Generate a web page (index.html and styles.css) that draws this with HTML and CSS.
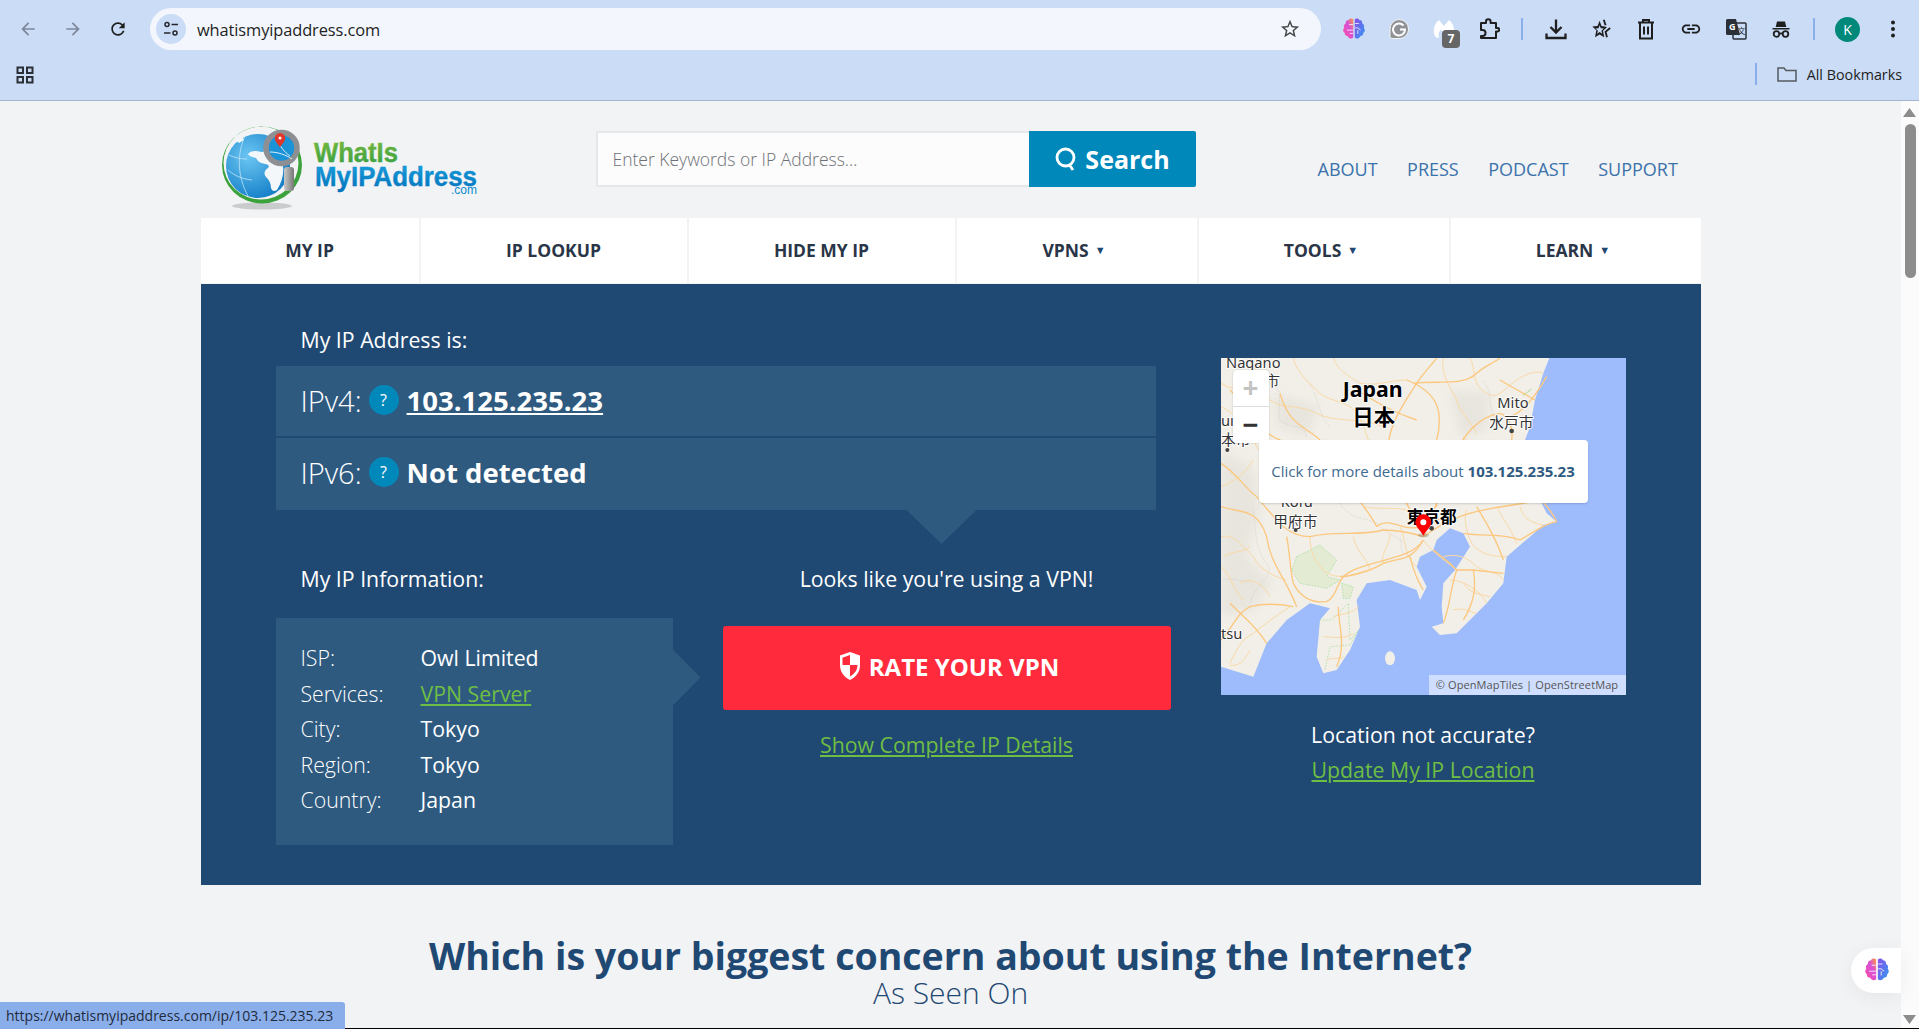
FILE: index.html
```html
<!DOCTYPE html>
<html lang="en">
<head>
    <meta charset="UTF-8">
    <meta name="viewport" content="width=device-width, initial-scale=1.0">
    <title>What Is My IP Address</title>
    <link rel="stylesheet" href="styles.css">
</head>
<body>
    <svg class="sprites" width="0" height="0">
        <defs>
            <linearGradient id="brainLeft" x1="0" y1="1" x2="1" y2="0">
                <stop offset="0" stop-color="#ff4fa0"/>
                <stop offset="0.6" stop-color="#d64fd8"/>
                <stop offset="1" stop-color="#ff9b3d"/>
            </linearGradient>
            <linearGradient id="brainRight" x1="0" y1="0" x2="1" y2="1">
                <stop offset="0" stop-color="#8a4fe8"/>
                <stop offset="1" stop-color="#2f9bf5"/>
            </linearGradient>
            <symbol id="brain" viewBox="2 2 20 20">
                <path fill="url(#brainLeft)" d="M11.300 3.200C10 1.900 7.700 2.200 7 3.900 5.300 3.900 4.200 5.300 4.500 7 2.900 7.700 2.300 9.600 3.100 11 1.700 12.300 1.900 14.600 3.500 15.500 3.400 17.300 4.700 18.600 6.400 18.500 6.900 20.500 9.700 21.300 11.300 19.800Z"/>
                <path fill="url(#brainRight)" d="M12.700 3.200C14 1.900 16.300 2.200 17 3.900 18.700 3.900 19.800 5.300 19.500 7 21.100 7.700 21.700 9.600 20.900 11 22.300 12.300 22.100 14.600 20.500 15.500 20.600 17.300 19.300 18.600 17.600 18.500 17.100 20.500 14.300 21.300 12.700 19.800Z"/>
                <path fill="none" stroke="#fff" stroke-width="0.700" d="M11 8H7.500M11 13H5.500M8 16h3M13 7h3.500M13 11h2.500l2.500 2M15.500 16.500V13"/>
            </symbol>
        </defs>
    </svg>

    <!-- browser bar -->
    <header class="chrome">
        <div class="toolbar">
            <span class="tb-btn"><svg class="ic-20" viewBox="0 0 24 24"><path fill="#7d8798" d="M20 11H7.830l5.590-5.590L12 4l-8 8 8 8 1.410-1.410L7.830 13H20v-2z"/></svg></span>
            <span class="tb-btn"><svg class="ic-20" viewBox="0 0 24 24"><path fill="#7d8798" d="M12 4l-1.410 1.410L16.170 11H4v2h12.170l-5.580 5.590L12 20l8-8z"/></svg></span>
            <span class="tb-btn"><svg class="ic-20" viewBox="0 0 24 24"><path fill="#1f1f1f" d="M17.650 6.350C16.200 4.900 14.210 4 12 4c-4.420 0-7.990 3.580-7.990 8s3.570 8 7.990 8c3.730 0 6.840-2.550 7.730-6h-2.080c-.82 2.330-3.040 4-5.650 4-3.310 0-6-2.690-6-6s2.690-6 6-6c1.660 0 3.140.69 4.220 1.780L13 11h7V4l-2.350 2.350z"/></svg></span>
            <div class="omnibox">
                <span class="tune">
                    <svg class="ic-18" viewBox="0 0 18 18" fill="none" stroke="#26282c" stroke-width="1.500"><circle cx="5" cy="4.500" r="2"/><path d="M9.500 4.500H16M2 13h6.500"/><circle cx="13" cy="13" r="2"/></svg>
                </span>
                <span class="url">whatismyipaddress.com</span>
                <svg class="ic-22" viewBox="0 0 24 24"><path fill="#444746" d="M22 9.240l-7.190-.62L12 2 9.190 8.630 2 9.240l5.460 4.730L5.820 21 12 17.270 18.180 21l-1.630-7.030L22 9.240zM12 15.400l-3.760 2.270 1-4.280-3.320-2.880 4.380-.38L12 6.100l1.710 4.040 4.380.38-3.320 2.880 1 4.280L12 15.400z"/></svg>
            </div>
            <span class="tb-btn"><svg class="ic-22"><use href="#brain"/></svg></span>
            <span class="tb-btn">
                <svg class="ic-22" viewBox="0 0 22 22"><path fill="#8f9296" stroke="#f4f4f4" d="M11 1.500a9.500 9.500 0 0 1 9.500 9.500c0 5.200-4.200 9.500-9.500 9.500H4a2 2 0 0 1-2-2V11A9.500 9.500 0 0 1 11 1.500z"/><path fill="none" stroke="#fff" stroke-width="2" d="M15.500 7.500A6 6 0 1 0 17 11.500h-5"/></svg>
            </span>
            <span class="tb-btn">
                <svg class="ic-22" viewBox="0 0 22 22"><path fill="#fff" d="M1 16C0 9 3 4 6 2l5 6 5-6c3 2 6 7 5 14-1 3-3 4-5 4 1-4 0-7-2-8l-3 3-3-3c-2 1-3 4-2 8-2 0-4-1-5-4z"/></svg>
                <span class="badge">7</span>
            </span>
            <span class="tb-btn"><svg class="ic-22" viewBox="0 0 22 22" fill="none" stroke="#1f1f1f" stroke-width="2" stroke-linejoin="round"><path d="M3 5h5V3.500a2.300 2.300 0 0 1 4.600 0V5H18v5h1.500a1.700 1.700 0 0 1 0 3.400H18V20H3v-2h1.500a2.500 2.500 0 0 0 0-6H3z"/></svg></span>
            <span class="tb-sep"></span>
            <span class="tb-btn"><svg class="ic-22" viewBox="0 0 22 22" fill="none" stroke="#1f1f1f" stroke-width="2.300"><path d="M11 1.500V14M5.500 9l5.500 5.500L16.500 9M1.500 15.500V20h19v-4.500"/></svg></span>
            <span class="tb-btn"><svg class="ic-22" viewBox="0 0 24 24"><path fill="#1f1f1f" d="M14 9.240l-3.500-.4L8.500 3 6.200 8.630 0.500 9.240l4.400 4.200L3.500 21l5-3 5 3-1.300-7.030 4.300-4zM8.500 15.400l-2.700 1.700.8-3.300-2.500-2.300 3.300-.3L8.500 8l1.200 3.200 3.300.3-2.500 2.300.8 3.300z" transform="translate(2 0)"/><path fill="none" stroke="#1f1f1f" stroke-width="2" d="M15 2l2 6M22 11l-5 4 1.500 6"/></svg></span>
            <span class="tb-btn"><svg class="ic-22" viewBox="0 0 22 22" fill="none" stroke="#1f1f1f" stroke-width="2"><path d="M3 4.500h16M8 4V2h6v2M5 5v15.500h12V5M9 8.500v8M13 8.500v8"/></svg></span>
            <span class="tb-btn"><svg class="ic-22" viewBox="0 0 24 24"><path fill="#1f1f1f" d="M3.900 12c0-1.710 1.390-3.100 3.100-3.100h4V7H7c-2.760 0-5 2.240-5 5s2.240 5 5 5h4v-1.900H7c-1.710 0-3.100-1.390-3.100-3.100zM8 13h8v-2H8v2zm9-6h-4v1.900h4c1.710 0 3.100 1.390 3.100 3.100s-1.390 3.100-3.100 3.100h-4V17h4c2.760 0 5-2.240 5-5s-2.240-5-5-5z"/></svg></span>
            <span class="tb-btn">
                <svg class="ic-24" viewBox="0 0 24 24"><rect x="9" y="6" width="13" height="16" rx="1" fill="#cadcf6" stroke="#2b2f36" stroke-width="1.500"/><path d="M2 3.500A1.500 1.500 0 0 1 3.500 2H12l4 16H3.500A1.500 1.500 0 0 1 2 16.500z" fill="#2b2f36"/><text class="tr-g" x="5" y="13">G</text><text class="tr-zh" x="13.500" y="16.500">文</text></svg>
            </span>
            <span class="tb-btn"><svg class="ic-22" viewBox="0 0 22 22"><path fill="#1f1f1f" d="M7 3.500h8l1.300 5.500H5.700zM2.500 10h17v1.600h-17z"/><g fill="none" stroke="#1f1f1f" stroke-width="1.800"><circle cx="6.500" cy="16" r="2.800"/><circle cx="15.500" cy="16" r="2.800"/><path d="M9.300 15.500h3.400"/></g></svg></span>
            <span class="tb-sep"></span>
            <span class="tb-btn"><span class="avatar">K</span></span>
            <span class="tb-btn"><svg class="ic-20" viewBox="0 0 20 20" fill="#1f1f1f"><circle cx="10" cy="3.500" r="2"/><circle cx="10" cy="10" r="2"/><circle cx="10" cy="16.500" r="2"/></svg></span>
        </div>
        <div class="bookmarks">
            <svg class="ic-18 apps" viewBox="0 0 18 18" fill="none" stroke="#2b2f36" stroke-width="2"><rect x="1.500" y="1.500" width="5.500" height="5.500"/><rect x="11" y="1.500" width="5.500" height="5.500"/><rect x="1.500" y="11" width="5.500" height="5.500"/><rect x="11" y="11" width="5.500" height="5.500"/></svg>
            <span class="tb-sep"></span>
            <svg class="ic-22 folder" viewBox="0 0 22 22" fill="none" stroke="#565a60" stroke-width="1.500"><path d="M2 5h6l2 2.500h10V18H2z"/></svg>
            <span class="all-bookmarks">All Bookmarks</span>
        </div>
    </header>

    <div class="viewport">
        <main class="page">
            <div class="site-header">
                <a class="logo" href="#">
                    <svg width="275" height="92" viewBox="215 120 275 92">
                        <defs>
                            <radialGradient id="sphere" cx="0.35" cy="0.35" r="0.8">
                                <stop offset="0" stop-color="#6cc6f2"/>
                                <stop offset="1" stop-color="#0875c2"/>
                            </radialGradient>
                            <linearGradient id="handle" x1="0" y1="0" x2="1" y2="0">
                                <stop offset="0" stop-color="#c8c8c8"/>
                                <stop offset="1" stop-color="#777"/>
                            </linearGradient>
                            <linearGradient id="greenText" x1="0" y1="0" x2="0" y2="1">
                                <stop offset="0" stop-color="#7cba3d"/>
                                <stop offset="1" stop-color="#2f9e44"/>
                            </linearGradient>
                            <linearGradient id="blueText" x1="0" y1="0" x2="0" y2="1">
                                <stop offset="0" stop-color="#1aa0dc"/>
                                <stop offset="1" stop-color="#0072bc"/>
                            </linearGradient>
                        </defs>
                        <ellipse cx="262" cy="206" rx="30" ry="3.500" fill="#c9cbcd"/>
                        <path fill="#3ca23c" fill-rule="evenodd" d="M222 165a40 38.500 0 1 0 80 0 40 38.500 0 1 0-80 0zM223.500 163a37.500 36.500 0 1 1 75 0 37.500 36.500 0 1 1-75 0z"/>
                        <circle cx="258" cy="166" r="32" fill="url(#sphere)"/>
                        <path fill="#f4f7fa" d="M248 154c4-4 9-3 13-2 5 0 8-2 12 0 6 3 9 8 10 14 1 8-1 16-6 24-3 2-5 1-6-2 0-5-2-8-5-11-3-4-1-7 2-9 2-2 0-4-3-4-4-1-7-2-9-6-3-1-6-1-8-4zM236 140l6-3 2 3-5 3z"/>
                        <path fill="none" stroke="#bfe3f7" stroke-width="0.800" d="M228 170c8 7 16 9 24 10M245 136c-8 18-8 40 3 60M229 155c6 3 12 4 18 4"/>
                        <circle cx="281.500" cy="148" r="15.500" fill="#1c93d6" stroke="#8d8f92" stroke-width="5.500"/>
                        <path fill="none" stroke="#d8eefa" stroke-width="1" d="M270 152c8 0 16 3 22 7M276 138c4 8 8 14 14 18"/>
                        <path fill="#e1372b" d="M280 133a5.200 5.200 0 0 1 5.200 5.200c0 3.200-3.500 6-5.200 9-1.700-3-5.200-5.800-5.200-9A5.200 5.200 0 0 1 280 133z"/>
                        <circle cx="280" cy="138" r="1.500" fill="#fff"/>
                        <rect x="284" y="167" width="10" height="24" rx="3" fill="url(#handle)"/>
                        <text class="logo-what" x="314" y="162" textLength="84" lengthAdjust="spacingAndGlyphs" fill="url(#greenText)" stroke="url(#greenText)">WhatIs</text>
                        <text class="logo-my" x="315" y="186" textLength="162" lengthAdjust="spacingAndGlyphs" fill="url(#blueText)" stroke="url(#blueText)">MyIPAddress</text>
                        <text class="logo-com" x="451" y="194" textLength="26" lengthAdjust="spacingAndGlyphs">.com</text>
                    </svg>
                </a>
                <form class="search">
                    <input class="search-input" type="text" placeholder="Enter Keywords or IP Address...">
                    <button class="search-btn" type="button">
                        <svg class="ic-24" viewBox="0 0 24 24" fill="none" stroke="#fff" stroke-width="2.800"><circle cx="11.500" cy="10.500" r="8.500"/><path d="M15.500 18l3.500 5"/></svg>
                        Search
                    </button>
                </form>
                <nav class="top-links">
                    <a href="#">ABOUT</a>
                    <a href="#">PRESS</a>
                    <a href="#">PODCAST</a>
                    <a href="#">SUPPORT</a>
                </nav>
            </div>

            <nav class="main-nav">
                <a href="#">MY IP</a>
                <a href="#">IP LOOKUP</a>
                <a href="#">HIDE MY IP</a>
                <a href="#">VPNS<i class="caret">▼</i></a>
                <a href="#">TOOLS<i class="caret">▼</i></a>
                <a href="#">LEARN<i class="caret">▼</i></a>
            </nav>

            <section class="panel">
                <div class="panel-main">
                    <h2 class="panel-title">My IP Address is:</h2>
                    <div class="ip-box">
                        <div class="ip-row">
                            <span class="ip-label">IPv4:</span>
                            <span class="help">?</span>
                            <a class="ip-value" href="#">103.125.235.23</a>
                        </div>
                        <div class="ip-row ip-row-last">
                            <span class="ip-label">IPv6:</span>
                            <span class="help">?</span>
                            <span class="ip-value">Not detected</span>
                        </div>
                    </div>

                    <div class="info-grid">
                        <div class="info-col">
                            <h3 class="panel-title">My IP Information:</h3>
                            <dl class="info-box">
                                <dt>ISP:</dt><dd>Owl Limited</dd>
                                <dt>Services:</dt><dd><a href="#">VPN Server</a></dd>
                                <dt>City:</dt><dd>Tokyo</dd>
                                <dt>Region:</dt><dd>Tokyo</dd>
                                <dt>Country:</dt><dd>Japan</dd>
                            </dl>
                        </div>
                        <div class="vpn-col">
                            <p class="panel-title">Looks like you're using a VPN!</p>
                            <a class="rate-btn" href="#">
                                <svg width="22" height="28" viewBox="0 0 22 28"><path fill="#fff" d="M11 0l10 3.500V13c0 7-4 12-10 15C5 25 1 20 1 13V3.500z"/><path fill="#ff2a3c" d="M11 3L3.500 5.700V13H11zM11 13v11.500c4.500-2.500 7.500-6.500 7.500-11.500z"/></svg>
                                RATE YOUR VPN
                            </a>
                            <a class="green-link details-link" href="#">Show Complete IP Details</a>
                        </div>
                    </div>
                </div>

                <div class="panel-side">
                    <div class="map">
                        <svg class="map-svg" width="405" height="337" viewBox="33 24 1215 1011">
                            <defs>
                                <filter id="soft"><feGaussianBlur stdDeviation="14"/></filter>
                            </defs>
                            <rect x="33" y="24" width="1215" height="1011" fill="#9ebcfc"/>
                            <path fill="#f1efe8" d="M33 24H1018L1000 70 975 150 960 230 945 270 975 340 985 440 1010 490 1040 515 1000 525 960 560 890 620 880 700 830 760 800 790 740 850 690 855 665 830 700 820 695 770 700 700 735 660 780 590 760 550 720 535 680 570 670 600 630 620 620 650 650 710 630 750 620 720 540 690 470 700 440 750 450 830 420 900 380 960 340 970 320 920 330 810 360 775 300 760 230 810 170 880 130 980 33 950Z"/>
                            <ellipse cx="540" cy="925" rx="15" ry="21" fill="#f1efe8"/>
                            <g filter="url(#soft)" fill="#e2dfd7" opacity="0.600">
                                <path d="M33 300L130 350 150 480 110 620 190 700 130 780 33 800Z"/>
                                <path d="M190 130L330 170 290 260 200 230Z"/>
                                <path d="M720 120L840 130 830 240 750 260Z"/>
                            </g>
                            <g fill="#e3ebd3" stroke="#9adb94" stroke-width="2" stroke-dasharray="5 4">
                                <path d="M260 620L330 585 380 630 350 680 390 690 350 715 270 700 245 660Z"/>
                                <path d="M395 700L430 710 420 745 400 745Z"/>
                                <path fill="none" d="M330 810H365L415 760 420 870 445 840 420 885 360 890 345 960"/>
                            </g>
                            <path d="M940 135l25-18" stroke="#a6dc93" stroke-width="5" stroke-dasharray="3 3" fill="none"/>
                            <g fill="none" stroke="#c9c6bf" stroke-width="2" stroke-dasharray="3 4">
                                <path d="M200 110c20 40 0 70 10 100 40 30 70 10 80 50M290 90c40 50 30 100 70 140M820 90c30 40 10 80 40 120M390 460c30 50 70 40 110 60 40 40 70 40 90 70M130 480c10 60 0 110 40 160 30 40-30 50-50 120M570 560c10 30-10 40 30 60M40 690c30-10 60 10 80 0"/>
                            </g>
                            <g fill="none" stroke="#fbd9a6" stroke-width="3">
                                <path d="M33 100C80 130 130 110 180 150 220 180 260 160 320 190 380 220 440 200 520 230"/>
                                <path d="M250 24C260 70 300 100 330 130 370 160 410 150 440 190 470 230 470 280 500 320"/>
                                <path d="M370 24C380 60 420 80 450 100 500 110 540 90 590 90"/>
                                <path d="M700 24C690 70 720 110 740 150 750 190 780 210 800 250"/>
                                <path d="M780 24C800 60 780 100 830 130 860 150 880 120 920 90 950 70 980 60 1000 70"/>
                                <path d="M900 270C890 320 930 340 975 340"/>
                                <path d="M560 300C620 290 680 320 730 320"/>
                                <path d="M33 170C70 190 110 220 130 270 150 320 190 340 240 360"/>
                                <path d="M130 330C100 380 60 400 33 410"/>
                                <path d="M240 360C300 390 360 370 400 380"/>
                                <path d="M33 560C70 550 100 590 130 620 150 660 190 680 230 690"/>
                                <path d="M33 650C60 670 70 720 100 750"/>
                                <path d="M60 940C80 900 90 870 130 850 180 810 210 790 240 770"/>
                                <path d="M430 560C440 610 470 620 480 660"/>
                                <path d="M300 560C300 600 310 630 340 660 370 690 420 680 470 660"/>
                                <path d="M540 550C540 590 510 610 520 640"/>
                                <path d="M570 530C590 570 580 620 620 650"/>
                                <path d="M640 570C660 600 690 620 740 660"/>
                                <path d="M770 480C760 510 770 540 780 570 800 610 840 620 890 620"/>
                                <path d="M860 470C880 510 900 530 920 580"/>
                                <path d="M930 470C940 510 970 520 1000 525"/>
                                <path d="M720 690C760 690 810 720 830 760"/>
                                <path d="M730 780C760 770 790 790 800 790"/>
                                <path d="M370 800C400 790 430 790 445 770"/>
                                <path d="M340 860C370 860 400 870 430 850"/>
                                <path d="M350 930C370 920 390 930 400 920"/>
                                <path d="M120 24C130 60 160 80 190 110M440 300C480 270 510 300 540 330M760 260C790 300 830 310 870 300M820 330C860 370 900 360 960 400"/>
                                <path d="M40 620C70 600 100 610 120 590M90 700C120 680 160 700 180 740M460 470C510 480 550 470 590 480M120 900C100 940 80 950 60 945"/>
                                <path d="M700 620C740 610 770 620 800 650 830 670 860 660 880 690M760 700C780 730 800 730 840 740"/>
                            </g>
                            <g fill="none" stroke="#fcc77e" stroke-width="4">
                                <path d="M33 340C80 370 110 420 140 440 200 510 230 560 300 560 380 540 450 560 520 540 570 540 610 550 640 560"/>
                                <path d="M640 560C680 470 700 400 730 320 760 260 800 200 870 190 900 200 910 240 905 270"/>
                                <path d="M640 550C600 470 560 430 540 330 520 260 560 190 620 100 640 70 660 50 680 24"/>
                                <path d="M640 560C760 470 850 480 990 450 1020 470 1030 500 1040 515"/>
                                <path d="M730 320C800 330 880 270 930 280"/>
                                <path d="M500 530C470 470 430 440 400 380 380 320 340 270 290 240 260 220 230 200 210 130"/>
                                <path d="M610 100C680 90 760 110 800 70 820 50 850 40 870 24"/>
                                <path d="M590 90C690 130 700 190 680 270 660 340 680 400 680 470"/>
                                <path d="M60 120C110 170 150 250 210 270 250 290 300 260 380 300"/>
                                <path d="M33 470C90 490 140 470 170 560 180 640 230 690 260 770"/>
                                <path d="M230 560C240 610 240 660 250 700 270 740 300 760 350 755 380 740 380 700 400 680 430 650 500 640 560 620 590 610 620 600 640 570"/>
                                <path d="M385 770C385 830 410 880 380 950"/>
                                <path d="M640 570C600 640 570 620 520 640 470 670 410 680 390 680"/>
                                <path d="M670 600L720 640 740 660 790 660 880 670"/>
                                <path d="M740 660C720 720 720 770 700 820M790 660C800 720 790 760 760 810"/>
                                <path d="M760 550C820 560 880 550 930 570 980 540 1010 520 1040 515"/>
                                <path d="M800 470C830 520 860 570 880 630"/>
                                <path d="M600 620C610 660 620 690 640 720"/>
                                <path d="M33 870C70 830 80 790 120 770 160 760 200 760 250 770M60 760C100 800 140 830 170 880"/>
                                <path d="M1010 80C970 150 930 190 900 200M870 90C920 120 960 140 975 150M440 120C520 170 560 190 620 210"/>
                                <path d="M700 500C650 530 620 540 580 530 550 520 520 510 500 530"/>
                            </g>
                            <text class="map-label" x="48" y="55">Nagano</text>
                            <text class="map-label" x="165" y="108">市</text>
                            <text class="map-label map-bold map-big" x="398" y="142">Japan</text>
                            <text class="map-label map-bold map-big map-cjk" x="427" y="225">日本</text>
                            <text class="map-label" x="862" y="175">Mito</text>
                            <text class="map-label map-cjk" x="838" y="235">水戸市</text>
                            <circle cx="905" cy="243" r="7" fill="#444"/>
                            <text class="map-label" x="33" y="228">uı</text>
                            <text class="map-label map-cjk" x="33" y="285">本市</text>
                            <circle cx="52" cy="300" r="6" fill="#444"/>
                            <text class="map-label" x="212" y="470">Kofu</text>
                            <text class="map-label map-cjk" x="190" y="530">甲府市</text>
                            <circle cx="257" cy="540" r="6" fill="#444"/>
                            <text class="map-label map-bold map-cjk map-city" x="590" y="518">東京都</text>
                            <circle cx="665" cy="535" r="7" fill="#444"/>
                            <text class="map-label" x="33" y="868">tsu</text>
                            <ellipse cx="640" cy="556" rx="16" ry="6" fill="#000" opacity="0.180"/>
                            <path fill="#f00" d="M640 493a24 24 0 0 1 24 24c0 14-16 24-24 40-8-16-24-26-24-40a24 24 0 0 1 24-24z"/>
                            <circle cx="640" cy="517" r="9" fill="#fff"/>
                        </svg>
                        <div class="zoom-ctl">
                            <span class="zoom-in">+</span>
                            <span class="zoom-out">−</span>
                        </div>
                        <div class="map-popup">Click for more details about <b>103.125.235.23</b></div>
                        <div class="map-attrib">© OpenMapTiles | OpenStreetMap</div>
                    </div>
                    <p class="panel-title side-note">Location not accurate?</p>
                    <a class="green-link" href="#">Update My IP Location</a>
                </div>
            </section>

            <h2 class="concern">Which is your biggest concern about using the Internet?</h2>
            <h3 class="seen-on">As Seen On</h3>
        </main>

        <div class="scrollbar">
            <i class="arrow-up"></i>
            <i class="thumb"></i>
            <i class="arrow-down"></i>
        </div>

        <div class="status-bubble">https://whatismyipaddress.com/ip/103.125.235.23</div>
        <div class="side-pill"><svg class="ic-24"><use href="#brain"/></svg></div>
    </div>
</body>
</html>
```

FILE: styles.css
```css
* {
    box-sizing: border-box;
}
html, body {
    height: 100%;
}
body {
    margin: 0;
    display: flex;
    flex-direction: column;
    overflow: hidden;
    font-family: "Open Sans", "Noto Sans", sans-serif;
    color: #1f4872;
    background-color: #f2f3f5;
}
a {
    color: inherit;
}
h2, h3, p, dl, dd {
    margin: 0;
    font-weight: 400;
}
svg {
    display: block;
}
.sprites {
    position: absolute;
}
.ic-18 { width: 18px; height: 18px; }
.ic-20 { width: 20px; height: 20px; }
.ic-22 { width: 22px; height: 22px; }
.ic-24 { width: 24px; height: 24px; }

/* browser bar */
.chrome {
    height: 101px;
    flex: none;
    background-color: #cadcf6;
    border-bottom: 1px solid #a4b5d0;
    color: #1f1f1f;
}
.toolbar {
    height: 58px;
    padding: 0 4px 0 5px;
    display: flex;
    align-items: center;
}
.tb-btn {
    width: 45px;
    height: 40px;
    flex: none;
    display: flex;
    align-items: center;
    justify-content: center;
    position: relative;
}
.tb-sep {
    width: 22px;
    height: 22px;
    flex: none;
    position: relative;
}
.tb-sep::after {
    content: "";
    position: absolute;
    left: 10px;
    top: 0;
    width: 2px;
    height: 100%;
    background-color: #8ab0ea;
}
.omnibox {
    flex: 1;
    height: 42px;
    margin: 0 10px;
    padding: 0 20px 0 6px;
    display: flex;
    align-items: center;
    background-color: #f3f7fd;
    border-radius: 21px;
}
.tune {
    width: 30px;
    height: 30px;
    display: flex;
    align-items: center;
    justify-content: center;
    background-color: #cadcf6;
    border-radius: 50%;
}
.url {
    flex: 1;
    margin: 1px 0 0 11px;
    font-size: 16.400px;
    letter-spacing: -0.1px;
}
.badge {
    position: absolute;
    left: 21px;
    top: 21px;
    width: 18px;
    height: 18px;
    background-color: #666;
    border-radius: 4px;
    color: #fff;
    font-size: 12px;
    font-weight: 700;
    line-height: 18px;
    text-align: center;
}
.avatar {
    width: 25px;
    height: 25px;
    background-color: #00897b;
    border-radius: 50%;
    color: #fff;
    font-size: 14px;
    line-height: 25px;
    text-align: center;
}
.tr-g {
    font-size: 9px;
    font-weight: 700;
    fill: #fff;
}
.tr-zh {
    font-family: "Noto Sans CJK SC", sans-serif;
    font-size: 8px;
    fill: #2b2f36;
}
.bookmarks {
    height: 42px;
    padding: 0 17px 10px 16px;
    display: flex;
    align-items: center;
}
.apps {
    margin: 2px auto 0 0;
}
.folder {
    margin-left: 9px;
}
.all-bookmarks {
    margin-left: 9px;
    font-size: 14.300px;
}

/* page */
.viewport {
    flex: 1;
    min-height: 0;
    display: flex;
    position: relative;
    border-bottom: 1px solid #000;
}
.page {
    flex: 1;
    min-width: 0;
    overflow: hidden;
}
.site-header {
    width: 1500px;
    height: 117px;
    margin: 0 auto;
    display: flex;
}
.logo {
    margin: 19px 0 0 14px;
}
.logo-what, .logo-my {
    font-family: "Liberation Sans", sans-serif;
    font-size: 27px;
    font-weight: 700;
    stroke-width: 0.4px;
}
.logo-com {
    font-family: "Liberation Sans", sans-serif;
    font-size: 12px;
    fill: #0a8bd0;
}
.search {
    margin: 30px 0 0 106px;
    display: flex;
    height: 56px;
}
.search-input {
    width: 433px;
    padding: 0 15px;
    background-color: #fcfcfc;
    border: 2px solid #e6e7e9;
    border-right: 0;
    font-family: inherit;
    font-size: 17.500px;
    font-weight: 300;
    outline: none;
}
.search-input::placeholder {
    color: #6d7075;
    opacity: 1;
}
.search-btn {
    width: 167px;
    display: flex;
    align-items: center;
    justify-content: center;
    gap: 7px;
    background-color: #0088bb;
    border: 0;
    border-radius: 0 2px 2px 0;
    color: #fff;
    font-family: inherit;
    font-size: 25px;
    font-weight: 700;
}
.top-links {
    margin: 55px 0 0 122px;
    display: flex;
    gap: 29.500px;
    height: 26px;
    font-size: 18px;
    line-height: 26px;
    color: #3a72ab;
}
.top-links a {
    text-decoration: none;
}
.main-nav {
    width: 1500px;
    margin: 0 auto;
    height: 66px;
    display: grid;
    grid-template-columns: 218px 266px 266px 240px 250px 250px;
    column-gap: 2px;
    padding-bottom: 1px;
}
.main-nav a {
    padding-bottom: 2px;
    display: flex;
    align-items: center;
    justify-content: center;
    background-color: #fff;
    color: #2a3547;
    font-size: 17.500px;
    font-weight: 700;
    text-decoration: none;
}
.caret {
    margin: 0 5px 0 6px;
    font-size: 11px;
    font-style: normal;
    color: #1f4872;
}

/* blue panel */
.panel {
    width: 1500px;
    height: 601px;
    margin: 0 auto;
    padding: 41px 75px 0;
    display: flex;
    gap: 50px;
    background-color: #1f4872;
    color: #fff;
}
.panel-main {
    width: 895px;
    flex: none;
}
.panel-title {
    font-size: 21.300px;
    line-height: 30px;
}
.panel-main > .panel-title {
    padding-left: 25px;
}
.ip-box {
    width: 880px;
    margin-top: 11px;
    position: relative;
}
.ip-box::after {
    content: "";
    position: absolute;
    left: 631px;
    top: 100%;
    width: 70px;
    height: 34px;
    background-color: #2e5a80;
    clip-path: polygon(0 0, 100% 0, 50% 100%);
}
.ip-row {
    height: 70px;
    margin-bottom: 2px;
    padding: 0 0 2px 25px;
    display: flex;
    align-items: center;
    background-color: #2e5a80;
    font-size: 27.500px;
}
.ip-row-last {
    height: 72px;
    margin-bottom: 0;
    padding-bottom: 4px;
}
.ip-label {
    font-size: 29px;
    font-weight: 300;
}
.help {
    width: 30px;
    height: 30px;
    margin: 0 8px 0 7px;
    background-color: #0088bb;
    border-radius: 50%;
    font-size: 16px;
    line-height: 30px;
    text-align: center;
}
.ip-value {
    font-weight: 700;
}
.info-grid {
    margin-top: 54px;
    display: flex;
}
.info-col {
    width: 447px;
    flex: none;
}
.info-col .panel-title {
    padding-left: 25px;
}
.info-box {
    width: 397px;
    height: 227px;
    margin-top: 24px;
    padding: 22px 0 0 25px;
    position: relative;
    display: grid;
    grid-template-columns: 120px 1fr;
    grid-auto-rows: 35.500px;
    align-items: center;
    background-color: #2e5a80;
    font-size: 21.300px;
}
.info-box::after {
    content: "";
    position: absolute;
    left: 100%;
    top: 31px;
    width: 28px;
    height: 57px;
    background-color: #2e5a80;
    clip-path: polygon(0 0, 100% 50%, 0 100%);
}
.info-box dt {
    font-weight: 300;
}
.info-box a {
    color: #6fbe44;
}
.vpn-col {
    width: 448px;
    text-align: center;
}
.rate-btn {
    height: 84px;
    margin-top: 32px;
    padding: 0 0 4px 5px;
    display: flex;
    align-items: center;
    justify-content: center;
    gap: 8px;
    background-color: #ff2a3c;
    border-radius: 3px;
    font-size: 24px;
    font-weight: 700;
    text-decoration: none;
}
.green-link {
    color: #6fbe44;
    font-size: 21.300px;
    line-height: 30px;
}
.details-link {
    display: inline-block;
    margin-top: 20px;
}
.panel-side {
    width: 405px;
    flex: none;
    margin-top: 33px;
    text-align: center;
}
.side-note {
    margin-top: 25px;
    margin-bottom: 5px;
}

/* map */
.map {
    width: 405px;
    height: 337px;
    position: relative;
    overflow: hidden;
    text-align: left;
}
.map-label {
    font-family: "Noto Sans", sans-serif;
    font-size: 44px;
    fill: #333;
    stroke: #fff;
    stroke-width: 5px;
    paint-order: stroke;
}
.map-cjk {
    font-family: "Noto Sans CJK JP", sans-serif;
    font-size: 44px;
}
.map-bold {
    font-weight: 700;
    fill: #000;
}
.map-big {
    font-size: 64px;
}
.map-city {
    font-size: 50px;
}
.zoom-ctl {
    position: absolute;
    left: 12px;
    top: 12px;
    width: 36px;
    height: 73px;
    display: flex;
    flex-direction: column;
    background-color: #fff;
    border-radius: 4px;
    box-shadow: 0 0 2px rgba(0, 0, 0, 0.2);
}
.zoom-ctl span {
    flex: 1;
    padding-bottom: 2px;
    display: flex;
    align-items: center;
    justify-content: center;
    font-size: 28px;
    font-weight: 700;
    line-height: 1;
}
.zoom-in {
    color: #c4c4c4;
    border-bottom: 1px solid #ddd;
}
.zoom-out {
    color: #333;
}
.map-popup {
    position: absolute;
    left: 38px;
    top: 82px;
    width: 329px;
    height: 63px;
    background-color: #fff;
    border-radius: 4px;
    box-shadow: 0 1px 2px rgba(0, 0, 0, 0.15);
    color: #3f6a91;
    font-size: 15px;
    line-height: 63px;
    text-align: center;
}
.map-popup b {
    color: #2e5a80;
}
.map-attrib {
    position: absolute;
    right: 0;
    bottom: 0;
    width: 197px;
    height: 20px;
    background-color: rgba(255, 255, 255, 0.5);
    color: #555;
    font-size: 11px;
    letter-spacing: 0.1px;
    line-height: 20px;
    text-align: center;
}

/* below panel */
.concern {
    margin-top: 48px;
    font-size: 37.500px;
    font-weight: 700;
    line-height: 46px;
    text-align: center;
}
.seen-on {
    font-size: 30px;
    font-weight: 300;
    line-height: 28px;
    text-align: center;
}

/* overlays and scrollbar */
.scrollbar {
    width: 18px;
    flex: none;
    position: relative;
    background-color: #fbfbfb;
}
.scrollbar i {
    position: absolute;
}
.arrow-up, .arrow-down {
    left: 2px;
    width: 13px;
    height: 9px;
    background-color: #8c8c8c;
}
.arrow-up {
    top: 7px;
    clip-path: polygon(50% 0, 100% 100%, 0 100%);
}
.arrow-down {
    bottom: 4px;
    clip-path: polygon(0 0, 100% 0, 50% 100%);
}
.thumb {
    left: 4px;
    top: 23px;
    width: 11px;
    height: 154px;
    background-color: #8c8c8c;
    border-radius: 6px;
}
.status-bubble {
    position: absolute;
    left: 0;
    bottom: -1px;
    width: 345px;
    height: 27px;
    padding-left: 6px;
    background-color: #8aaeea;
    border-radius: 0 3px 0 0;
    color: #1f2a3a;
    font-size: 14px;
    line-height: 27px;
}
.side-pill {
    position: absolute;
    right: 18px;
    top: 847px;
    width: 50px;
    height: 45px;
    padding: 10px 0 0 14px;
    background-color: #fff;
    border-radius: 23px 0 0 23px;
    box-shadow: 0 4px 20px rgba(0, 0, 0, 0.06);
}
```
